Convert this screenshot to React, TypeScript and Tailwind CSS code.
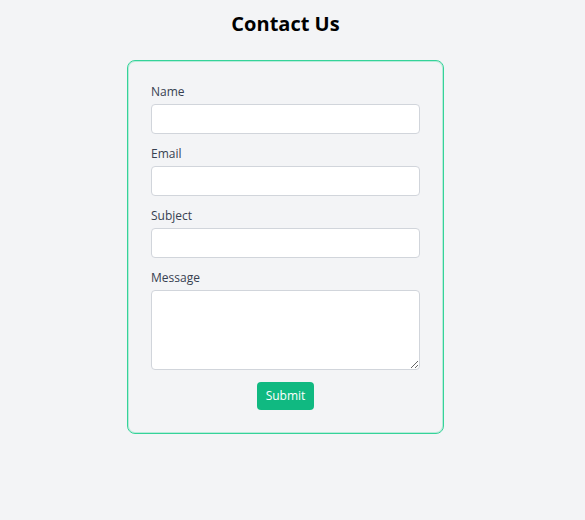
import React from "react";

const font = { fontFamily: '"Open Sans", "Noto Sans", sans-serif' };

function Field({ label, textarea }: { label: string; textarea?: boolean }) {
  return (
    <div className="mb-3 flex flex-col">
      <label className="mb-1 text-xs leading-4 text-[#374151]">{label}</label>
      {textarea ? (
        <textarea className="h-20 w-full rounded border border-[#d1d5db] bg-white px-2 py-1 text-sm" />
      ) : (
        <input className="h-[30px] w-full rounded border border-[#d1d5db] bg-white px-2 text-sm" />
      )}
    </div>
  );
}

export default function App() {
  return (
    <div className="min-h-screen bg-[#f3f4f6]" style={font}>
      <div className="flex w-[571px] flex-col items-center pt-2">
        <h1 className="mb-5 text-xl leading-8 font-bold text-black">Contact Us</h1>
        <form className="w-[317px] rounded-lg border border-[#34d399] px-[23px] pt-[23px] pb-[23px] shadow-[inset_0_0_0_1px_rgba(52,211,153,0.3)]">
          <Field label="Name" />
          <Field label="Email" />
          <Field label="Subject" />
          <Field label="Message" textarea />
          <div className="flex justify-center">
            <button
              type="button"
              className="h-7 rounded bg-[#10b981] px-[9px] text-xs text-white"
            >
              Submit
            </button>
          </div>
        </form>
      </div>
    </div>
  );
}
